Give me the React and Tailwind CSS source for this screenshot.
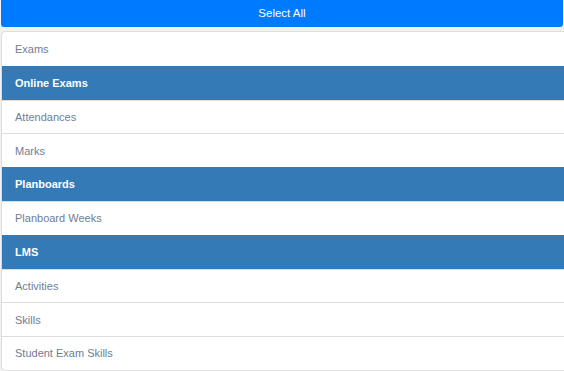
const items = [
  { label: "Exams" },
  { label: "Online Exams", active: true },
  { label: "Attendances" },
  { label: "Marks" },
  { label: "Planboards", active: true },
  { label: "Planboard Weeks" },
  { label: "LMS", active: true },
  { label: "Activities" },
  { label: "Skills" },
  { label: "Student Exam Skills" },
];

export default function App() {
  return (
    <div
      className="h-[371px] w-[564px] overflow-hidden bg-[#f2f2f4] pl-[1px]"
      style={{ fontFamily: '"Liberation Sans", Arial, sans-serif' }}
    >
      <button className="flex h-[27px] w-[562px] items-center justify-center rounded-b-[3px] bg-[#007bff] text-[11.5px] text-white">
        Select All
      </button>
      <ul className="mt-[4px] w-[600px] overflow-hidden rounded-[4px] border border-[#dddddd] bg-white">
        {items.map((item, i) => (
          <li
            key={item.label}
            className={
              "-mx-[1px] flex h-[33.8px] items-center px-[14px] text-[11px] " +
              (i > 0 ? "border-t " : "") +
              (item.active
                ? "border-[#337ab7] bg-[#337ab7] font-bold text-white"
                : "border-[#dddddd] text-[#6f7d94]")
            }
          >
            {item.label}
          </li>
        ))}
      </ul>
    </div>
  );
}
